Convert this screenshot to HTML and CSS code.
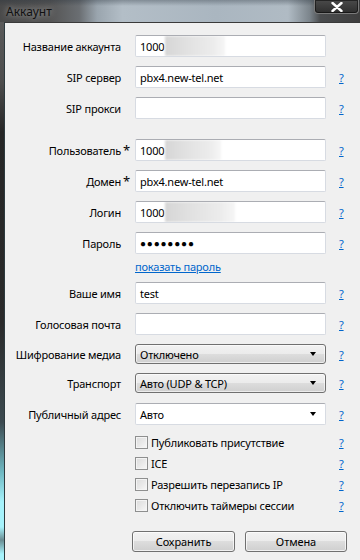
FILE: index.html
```html
<!DOCTYPE html>
<html lang="ru">
<head>
<meta charset="utf-8">
<title>Аккаунт</title>
<link rel="stylesheet" href="styles.css">
</head>
<body>
<div class="window">
  <div class="titlebar">
    <span class="title">Аккаунт</span>
    <span class="close">
      <svg width="14" height="10" viewBox="0 0 14 10"><path d="M2.5 1 L11.5 9 M11.5 1 L2.5 9" stroke="#fff" stroke-width="2.4" stroke-linecap="round"/></svg>
    </span>
  </div>
  <div class="main">
    <div class="frame-left"></div>
    <div class="client">
      <div class="row r-first">
        <label class="lbl">Название аккаунта</label><span class="star"></span>
        <div class="input">1000<span class="blur b1"></span></div><span></span>
      </div>
      <div class="row">
        <label class="lbl">SIP сервер</label><span class="star"></span>
        <div class="input">pbx4.new-tel.net</div><a class="help">?</a>
      </div>
      <div class="row">
        <label class="lbl">SIP прокси</label><span class="star"></span>
        <div class="input"></div><a class="help">?</a>
      </div>

      <div class="row r-group">
        <label class="lbl">Пользователь</label><span class="star">*</span>
        <div class="input">1000<span class="blur b2"></span></div><a class="help">?</a>
      </div>
      <div class="row">
        <label class="lbl">Домен</label><span class="star">*</span>
        <div class="input">pbx4.new-tel.net</div><a class="help">?</a>
      </div>
      <div class="row">
        <label class="lbl">Логин</label><span class="star"></span>
        <div class="input">1000<span class="blur b3"></span></div><a class="help">?</a>
      </div>
      <div class="row">
        <label class="lbl">Пароль</label><span class="star"></span>
        <div class="input dots">●●●●●●●●</div><a class="help">?</a>
      </div>
      <div class="row r-link">
        <span></span><span></span><a class="link">показать пароль</a><span></span>
      </div>

      <div class="row r-name">
        <label class="lbl">Ваше имя</label><span class="star"></span>
        <div class="input">test</div><a class="help">?</a>
      </div>
      <div class="row">
        <label class="lbl">Голосовая почта</label><span class="star"></span>
        <div class="input"></div><a class="help">?</a>
      </div>
      <div class="row r-sel">
        <label class="lbl">Шифрование медиа</label><span class="star"></span>
        <div class="select">Отключено<span class="arrow"></span></div><a class="help">?</a>
      </div>
      <div class="row r-sel">
        <label class="lbl">Транспорт</label><span class="star"></span>
        <div class="select">Авто (UDP &amp; TCP)<span class="arrow"></span></div><a class="help">?</a>
      </div>
      <div class="row r-combo">
        <label class="lbl">Публичный адрес</label><span class="star"></span>
        <div class="input combo">Авто<span class="arrow"></span></div><a class="help">?</a>
      </div>

      <div class="checks">
        <div class="row r-check"><span></span><span></span><label class="check"><span class="box"></span>Публиковать присутствие</label><a class="help">?</a></div>
        <div class="row r-check"><span></span><span></span><label class="check"><span class="box"></span>ICE</label><a class="help">?</a></div>
        <div class="row r-check"><span></span><span></span><label class="check"><span class="box"></span>Разрешить перезапись IP</label><a class="help">?</a></div>
        <div class="row r-check"><span></span><span></span><label class="check"><span class="box"></span>Отключить таймеры сессии</label><a class="help">?</a></div>
      </div>

      <div class="buttons">
        <button class="btn">Сохранить</button>
        <button class="btn">Отмена</button>
      </div>
    </div>
  </div>
</div>
</body>
</html>
```

FILE: styles.css
```css
* { box-sizing: border-box; }
html, body { margin: 0; padding: 0; }
body {
  width: 360px;
  height: 560px;
  overflow: hidden;
  font-family: "Segoe UI", "Noto Sans", "Open Sans", sans-serif;
  font-size: 11px;
  letter-spacing: -0.2px;
  color: #000;
  background: #3a3a3a;
}
.window {
  width: 360px;
  height: 560px;
  display: flex;
  flex-direction: column;
}
.titlebar {
  height: 22px;
  flex: none;
  display: flex;
  align-items: flex-start;
  justify-content: space-between;
  background:
    linear-gradient(180deg, rgba(40,50,60,0.35) 0, rgba(40,50,60,0) 6px),
    linear-gradient(90deg, #4a4a4a 0, #555 14%, #6a6e72 22%, #9aa5ae 27%, #b3bec7 34%, #aab6c0 60%, #b0bbc4 80%, #7c858c 86%, #4a4c4e 89%, #3e3e3e 100%);
}
.title {
  margin: 3px 0 0 6px;
  font-size: 12px;
  letter-spacing: 0;
  color: #111;
  text-shadow: 0 0 6px rgba(255,255,255,0.6);
}
.close {
  width: 45px;
  height: 14px;
  margin-right: 1px;
  display: flex;
  align-items: center;
  justify-content: center;
  background: linear-gradient(180deg, #4a4a4a, #2e2e2e);
  border: 1px solid #7a7a7a;
  border-top: none;
  border-radius: 0 0 4px 4px;
  box-shadow: inset 0 0 0 1px rgba(0,0,0,0.5);
}
.main {
  flex: 1;
  display: flex;
}
.frame-left {
  width: 4px;
  flex: none;
  background: linear-gradient(180deg, #5a5a5a 0, #4d4d4d 60px, #262626 110px, #2a2a2a 300px, #3c4a50 400px, #6fb8c2 450px, #a6f2fb 480px, #a6f2fb 505px, #6a8c92 518px, #a6f2fb 532px, #a6f2fb 560px);
}
.client {
  flex: 1;
  background: #f0f0f0;
  border-left: 1px solid #2d3a3e;
  border-top: 1px solid #3a3a3a;
  padding-top: 12px;
}
.row {
  display: grid;
  grid-template-columns: 116px 14px 191px 34px;
  align-items: center;
  height: 22px;
  margin-top: 9px;
}
.r-first { margin-top: 0; }
.r-group { margin-top: 20px; }
.r-link { height: 14px; margin-top: 5px; }
.r-name { margin-top: 9px; }
.r-sel { height: 20px; }
.r-combo { margin-top: 10px; }
.lbl {
  text-align: right;
  white-space: nowrap;
}
.star {
  padding-left: 2px;
  font-size: 13px;
  line-height: 12px;
  align-self: center;
}
.input {
  height: 22px;
  background: #fff;
  border: 1px solid #d7dbe2;
  border-top-color: #abadb3;
  border-radius: 2px;
  padding: 0 4px;
  display: flex;
  align-items: center;
  white-space: nowrap;
  overflow: hidden;
}
.dots {
  font-size: 10px;
  letter-spacing: 0.8px;
  padding-left: 4px;
}
.blur {
  display: inline-block;
  height: 20px;
  margin-left: 1px;
  background: linear-gradient(90deg, #d6d6d6 0, #e2e2e2 40%, #ececec 80%, #f6f6f6 100%);
  filter: blur(1.2px);
}
.b1 { width: 60px; }
.b2 { width: 56px; }
.b3 { width: 70px; }
.help {
  padding-left: 13px;
  color: #0066cc;
  text-decoration: underline;
  font-size: 11px;
}
.link {
  color: #0066cc;
  text-decoration: underline;
}
.select {
  height: 20px;
  border: 1px solid #707070;
  border-radius: 3px;
  background: linear-gradient(180deg, #f2f2f2 0, #ebebeb 50%, #dddddd 50%, #cfcfcf 100%);
  box-shadow: inset 0 0 0 1px rgba(255,255,255,0.6);
  padding: 0 4px;
  display: flex;
  align-items: center;
  justify-content: space-between;
  white-space: nowrap;
}
.arrow {
  width: 0;
  height: 0;
  border-left: 3.5px solid transparent;
  border-right: 3.5px solid transparent;
  border-top: 4px solid #000;
  margin-right: 5px;
}
.combo {
  justify-content: space-between;
}
.checks { margin-top: 7px; }
.r-check {
  height: 21px;
  margin-top: 0;
}
.check {
  display: flex;
  align-items: center;
  white-space: nowrap;
}
.box {
  width: 13px;
  height: 13px;
  margin-right: 3px;
  border: 1px solid #8e8f8f;
  background: linear-gradient(135deg, #dcdcdc 0, #e8e8e8 50%, #f8f8f8 100%);
  box-shadow: inset 0 0 0 1px #f4f4f4;
}
.buttons {
  display: flex;
  gap: 10px;
  margin-top: 15px;
  padding-left: 127px;
}
.btn {
  width: 103px;
  height: 21px;
  font-family: inherit;
  font-size: 11px;
  letter-spacing: -0.1px;
  color: #000;
  border: 1px solid #707070;
  border-radius: 3px;
  background: linear-gradient(180deg, #f2f2f2 0, #ebebeb 50%, #dddddd 50%, #cfcfcf 100%);
  box-shadow: inset 0 0 0 1px rgba(255,255,255,0.7);
  padding: 0;
}
.btn + .btn { width: 102px; }
```
